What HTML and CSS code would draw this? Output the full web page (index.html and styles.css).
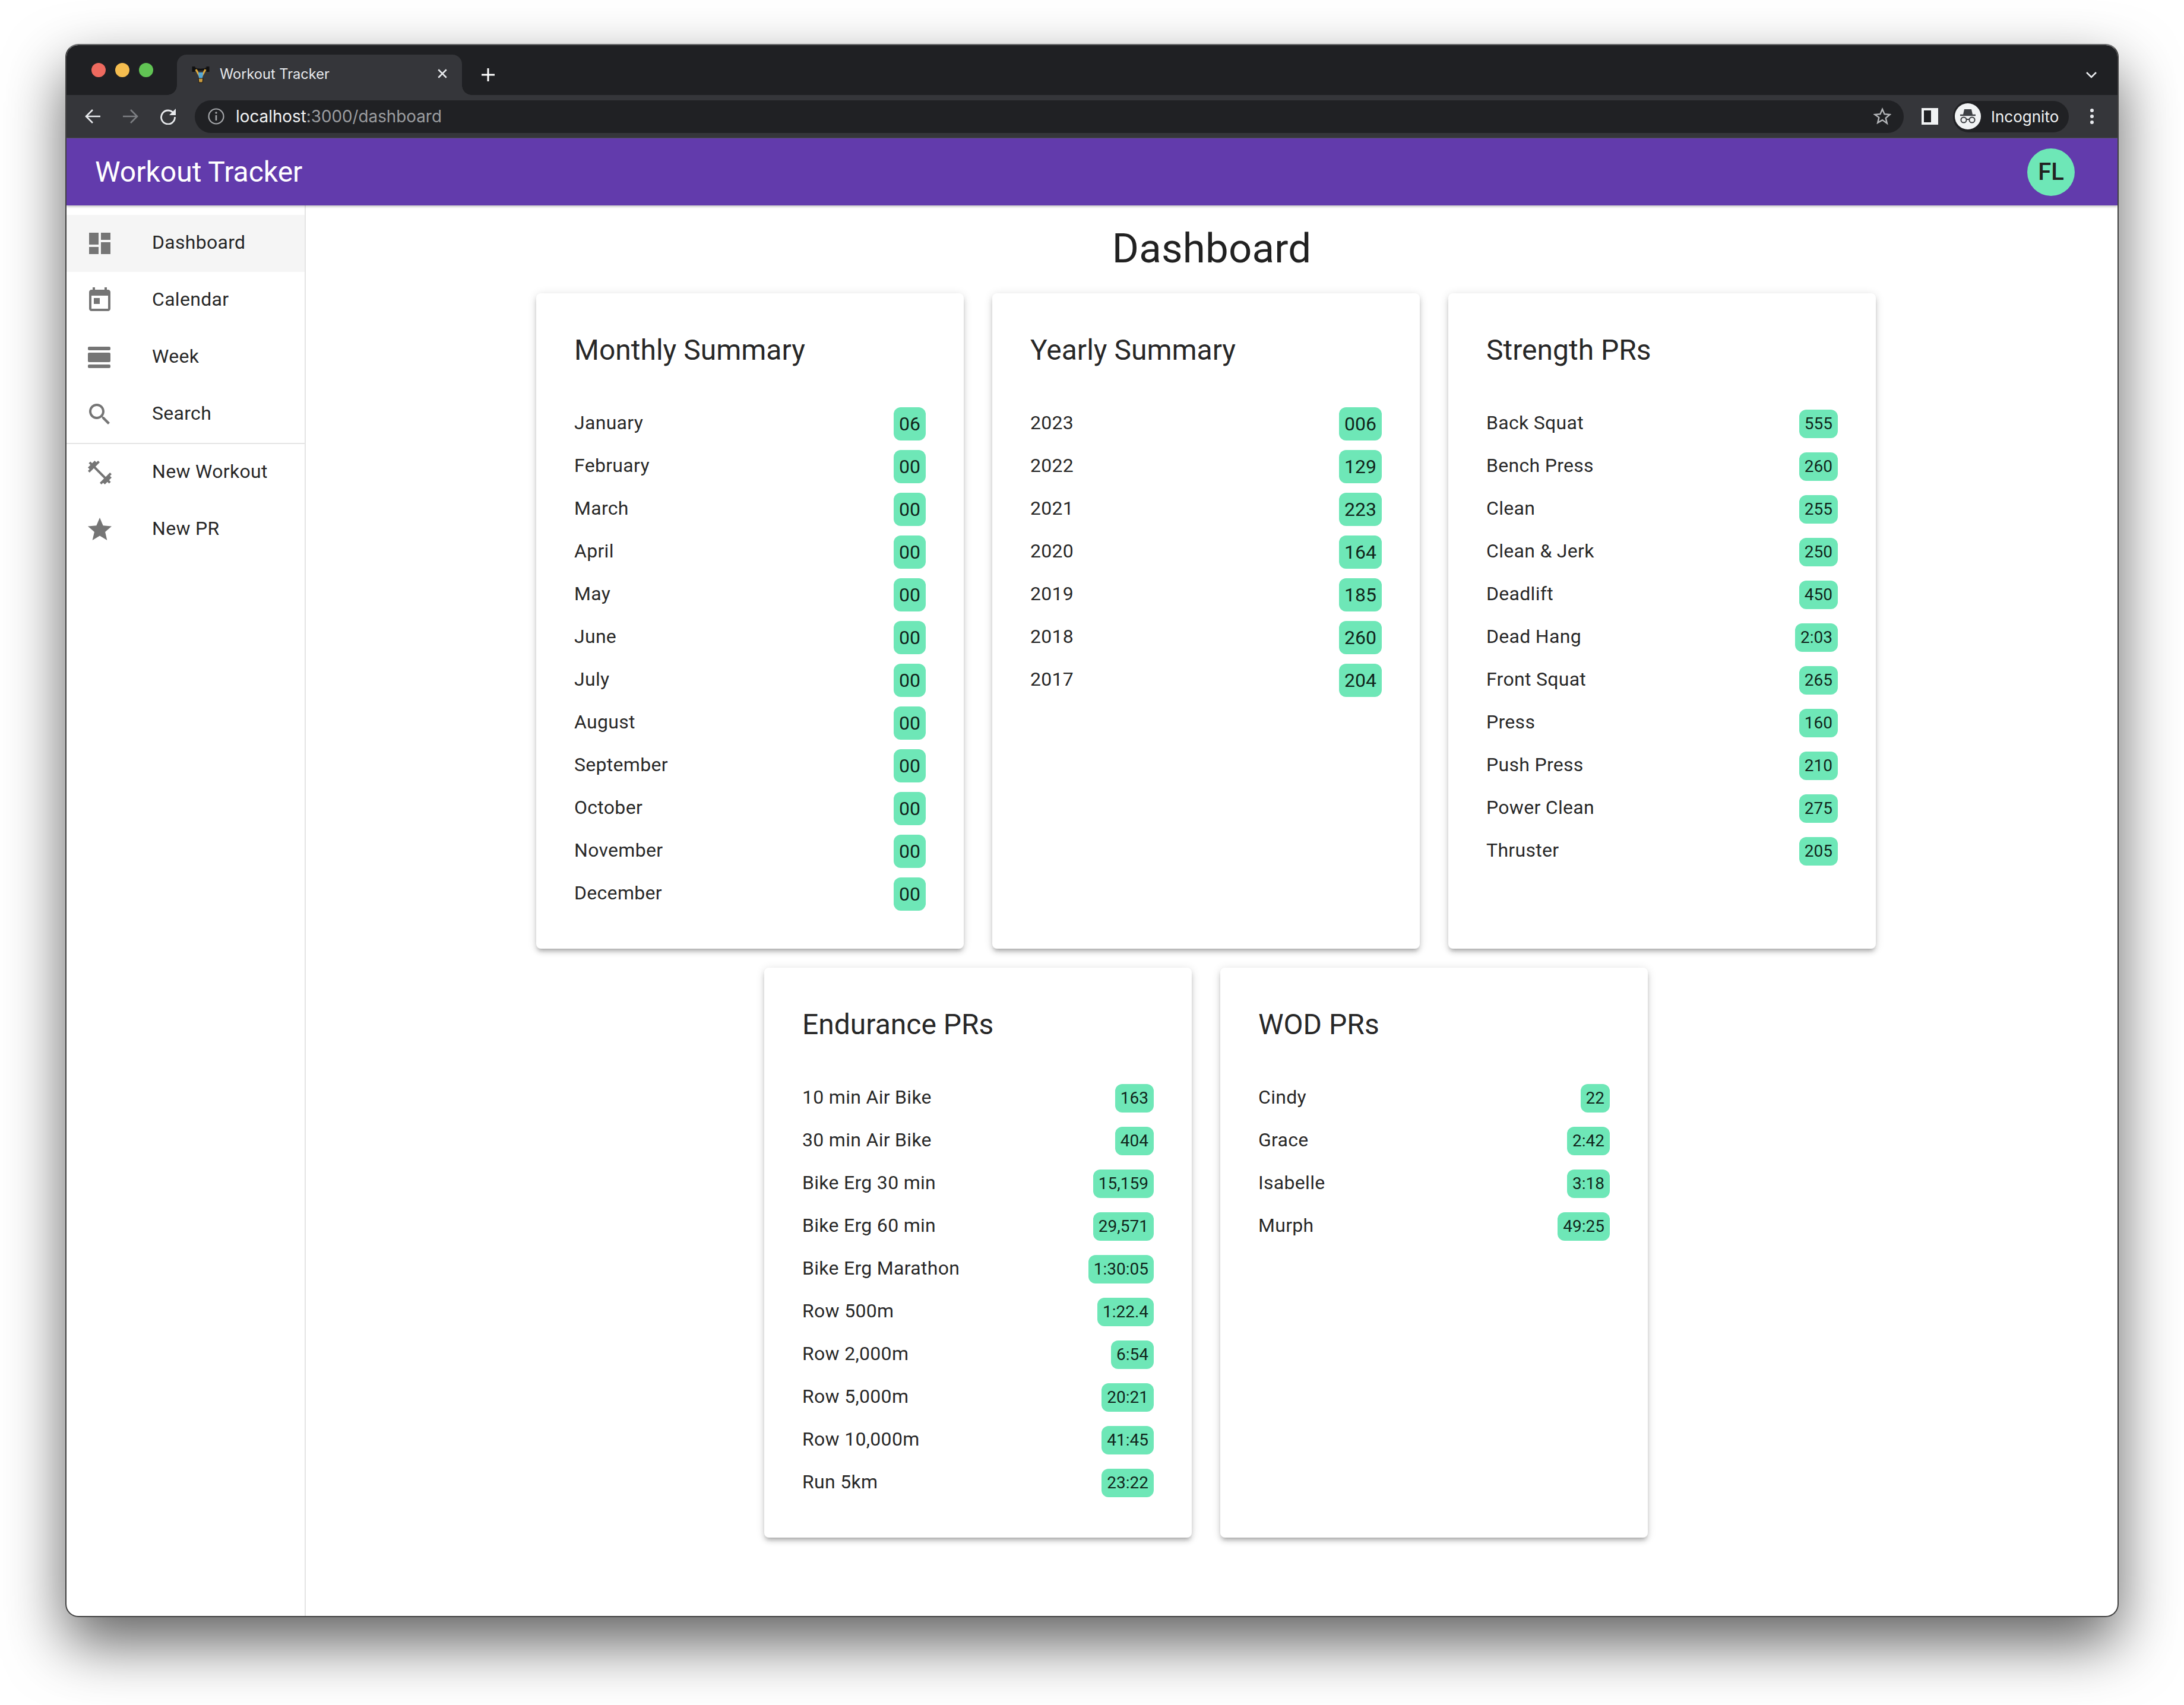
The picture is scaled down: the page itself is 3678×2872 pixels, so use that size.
FILE: index.html
```html
<!DOCTYPE html>
<html lang="en">
<head>
    <meta charset="UTF-8">
    <title>Workout Tracker</title>
    <link rel="stylesheet" href="styles.css">
</head>
<body>
<div class="window">

    <!-- browser chrome -->
    <div class="tabstrip">
        <div class="lights">
            <span class="light red"></span>
            <span class="light yellow"></span>
            <span class="light green"></span>
        </div>
        <div class="tab">
            <svg class="favicon" viewBox="0 0 30 32">
                <path d="M3 4v9M27 4v9" stroke="#111" stroke-width="5" fill="none"/>
                <path d="M5 7c4 3 16 3 20 0" stroke="#111" stroke-width="3" fill="none"/>
                <path d="M7 9l6 11h4l6-11" stroke="#e2ac3c" stroke-width="3" fill="none"/>
                <path d="M11 14h8l-1 10h-6z" fill="#54a8d8"/>
                <path d="M11 24h8l-1 7h-6z" fill="#c99a3e" stroke="#111" stroke-width="1"/>
            </svg>
            <span class="tab-title">Workout Tracker</span>
            <svg class="tab-close" viewBox="0 0 16 16"><path d="M2 2l12 12M14 2L2 14" stroke="#e8eaed" stroke-width="2.2"/></svg>
        </div>
        <svg class="new-tab" viewBox="0 0 24 24"><path d="M12 1v22M1 12h22" stroke="#fff" stroke-width="3"/></svg>
        <svg class="tab-menu" viewBox="0 0 20 12"><path d="M2 2l8 8 8-8" stroke="#e8eaed" stroke-width="2.6" fill="none"/></svg>
    </div>

    <div class="toolbar">
        <svg class="tool-icon" viewBox="0 0 28 28"><path d="M27 14H3M14 3L3 14l11 11" stroke="#e8eaed" stroke-width="2.6" fill="none"/></svg>
        <svg class="tool-icon forward" viewBox="0 0 28 28"><path d="M1 14h24M14 3l11 11-11 11" stroke="#7c7e82" stroke-width="2.6" fill="none"/></svg>
        <svg class="tool-icon reload" viewBox="0 0 28 28"><path d="M23.5 9A11.5 11.5 0 1 0 25.5 15" stroke="#e8eaed" stroke-width="2.8" fill="none"/><path d="M27 1v11H16z" fill="#e8eaed"/></svg>
        <div class="address">
            <svg class="info-icon" viewBox="0 0 28 28"><circle cx="14" cy="14" r="12.5" stroke="#a4a6a9" stroke-width="2.2" fill="none"/><path d="M14 12v9" stroke="#a4a6a9" stroke-width="2.6"/><circle cx="14" cy="8" r="1.7" fill="#a4a6a9"/></svg>
            <span class="url"><span class="host">localhost</span>:3000/dashboard</span>
            <svg class="bookmark" viewBox="0 0 30 30"><path d="M15 3l3.6 8.2 8.9.8-6.8 5.9 2.1 8.8L15 21.1l-7.8 4.6 2.1-8.8L2.5 12l8.9-.8z" stroke="#b4b6b9" stroke-width="2.4" fill="none"/></svg>
        </div>
        <div class="side-panel"></div>
        <div class="incognito">
            <svg class="incognito-icon" viewBox="0 0 44 44">
                <circle cx="22" cy="22" r="22" fill="#f1f3f4"/>
                <path d="M16 10h12l2 9H14z" fill="#3c3f43"/>
                <path d="M9 20h26" stroke="#3c3f43" stroke-width="2.4"/>
                <circle cx="15" cy="28" r="4.6" stroke="#3c3f43" stroke-width="2" fill="none"/>
                <circle cx="29" cy="28" r="4.6" stroke="#3c3f43" stroke-width="2" fill="none"/>
                <path d="M19.5 27h5" stroke="#3c3f43" stroke-width="2"/>
            </svg>
            <span>Incognito</span>
        </div>
        <div class="dots"><span></span><span></span><span></span></div>
    </div>

    <!-- app -->
    <header class="appbar">
        <div class="brand">Workout Tracker</div>
        <div class="avatar">FL</div>
    </header>

    <div class="app-body">
        <nav class="sidebar">
            <a class="nav-item selected">
                <svg class="nav-icon" viewBox="0 0 24 24"><path d="M3 13h8V3H3v10zm0 8h8v-6H3v6zm10 0h8V11h-8v10zm0-18v6h8V3h-8z"/></svg>
                <span class="nav-label">Dashboard</span>
            </a>
            <a class="nav-item">
                <svg class="nav-icon" viewBox="0 0 24 24"><path d="M19 3h-1V1h-2v2H8V1H6v2H5c-1.11 0-1.99.9-1.99 2L3 19c0 1.1.89 2 2 2h14c1.1 0 2-.9 2-2V5c0-1.1-.9-2-2-2zm0 16H5V8h14v11zM7 10h5v5H7z"/></svg>
                <span class="nav-label">Calendar</span>
            </a>
            <a class="nav-item">
                <svg class="nav-icon" viewBox="0 0 24 24"><path d="M3 21h17c.55 0 1-.45 1-1v-1c0-.55-.45-1-1-1H3c-.55 0-1 .45-1 1v1c0 .55.45 1 1 1zM20 8H3c-.55 0-1 .45-1 1v6c0 .55.45 1 1 1h17c.55 0 1-.45 1-1V9c0-.55-.45-1-1-1zM2 4v1c0 .55.45 1 1 1h17c.55 0 1-.45 1-1V4c0-.55-.45-1-1-1H3c-.55 0-1 .45-1 1z"/></svg>
                <span class="nav-label">Week</span>
            </a>
            <a class="nav-item">
                <svg class="nav-icon" viewBox="0 0 24 24"><path d="M15.5 14h-.79l-.28-.27C15.41 12.59 16 11.11 16 9.5 16 5.91 13.09 3 9.5 3S3 5.91 3 9.5 5.91 16 9.5 16c1.61 0 3.09-.59 4.23-1.57l.27.28v.79l5 4.99L20.49 19l-4.99-5zm-6 0C7.01 14 5 11.99 5 9.5S7.01 5 9.5 5 14 7.01 14 9.5 11.99 14 9.5 14z"/></svg>
                <span class="nav-label">Search</span>
            </a>
            <div class="nav-divider"></div>
            <a class="nav-item">
                <svg class="nav-icon" viewBox="0 0 24 24"><path d="M20.57 14.86L22 13.43 20.57 12 17 15.57 8.43 7 12 3.43 10.57 2 9.14 3.43 7.71 2 5.57 4.14 4.14 2.71 2.71 4.14l1.43 1.43L2 7.71l1.43 1.43L2 10.57 3.43 12 7 8.43 15.57 17 12 20.57 13.43 22l1.43-1.43L16.29 22l2.14-2.14 1.43 1.43 1.43-1.43-1.43-1.43L22 16.29z"/></svg>
                <span class="nav-label">New Workout</span>
            </a>
            <a class="nav-item">
                <svg class="nav-icon" viewBox="0 0 24 24"><path d="M12 17.27L18.18 21l-1.64-7.03L22 9.24l-7.19-.61L12 2 9.19 8.63 2 9.24l5.46 4.73L5.82 21z"/></svg>
                <span class="nav-label">New PR</span>
            </a>
        </nav>

        <main class="content">
            <h1 class="page-title">Dashboard</h1>

            <div class="card-row">
                <section class="card large-chips">
                    <h2>Monthly Summary</h2>
                    <div class="stat"><span class="stat-label">January</span><span class="chip">06</span></div>
                    <div class="stat"><span class="stat-label">February</span><span class="chip">00</span></div>
                    <div class="stat"><span class="stat-label">March</span><span class="chip">00</span></div>
                    <div class="stat"><span class="stat-label">April</span><span class="chip">00</span></div>
                    <div class="stat"><span class="stat-label">May</span><span class="chip">00</span></div>
                    <div class="stat"><span class="stat-label">June</span><span class="chip">00</span></div>
                    <div class="stat"><span class="stat-label">July</span><span class="chip">00</span></div>
                    <div class="stat"><span class="stat-label">August</span><span class="chip">00</span></div>
                    <div class="stat"><span class="stat-label">September</span><span class="chip">00</span></div>
                    <div class="stat"><span class="stat-label">October</span><span class="chip">00</span></div>
                    <div class="stat"><span class="stat-label">November</span><span class="chip">00</span></div>
                    <div class="stat"><span class="stat-label">December</span><span class="chip">00</span></div>
                </section>

                <section class="card large-chips">
                    <h2>Yearly Summary</h2>
                    <div class="stat"><span class="stat-label">2023</span><span class="chip">006</span></div>
                    <div class="stat"><span class="stat-label">2022</span><span class="chip">129</span></div>
                    <div class="stat"><span class="stat-label">2021</span><span class="chip">223</span></div>
                    <div class="stat"><span class="stat-label">2020</span><span class="chip">164</span></div>
                    <div class="stat"><span class="stat-label">2019</span><span class="chip">185</span></div>
                    <div class="stat"><span class="stat-label">2018</span><span class="chip">260</span></div>
                    <div class="stat"><span class="stat-label">2017</span><span class="chip">204</span></div>
                </section>

                <section class="card">
                    <h2>Strength PRs</h2>
                    <div class="stat"><span class="stat-label">Back Squat</span><span class="chip">555</span></div>
                    <div class="stat"><span class="stat-label">Bench Press</span><span class="chip">260</span></div>
                    <div class="stat"><span class="stat-label">Clean</span><span class="chip">255</span></div>
                    <div class="stat"><span class="stat-label">Clean &amp; Jerk</span><span class="chip">250</span></div>
                    <div class="stat"><span class="stat-label">Deadlift</span><span class="chip">450</span></div>
                    <div class="stat"><span class="stat-label">Dead Hang</span><span class="chip">2:03</span></div>
                    <div class="stat"><span class="stat-label">Front Squat</span><span class="chip">265</span></div>
                    <div class="stat"><span class="stat-label">Press</span><span class="chip">160</span></div>
                    <div class="stat"><span class="stat-label">Push Press</span><span class="chip">210</span></div>
                    <div class="stat"><span class="stat-label">Power Clean</span><span class="chip">275</span></div>
                    <div class="stat"><span class="stat-label">Thruster</span><span class="chip">205</span></div>
                </section>
            </div>

            <div class="card-row">
                <section class="card">
                    <h2>Endurance PRs</h2>
                    <div class="stat"><span class="stat-label">10 min Air Bike</span><span class="chip">163</span></div>
                    <div class="stat"><span class="stat-label">30 min Air Bike</span><span class="chip">404</span></div>
                    <div class="stat"><span class="stat-label">Bike Erg 30 min</span><span class="chip">15,159</span></div>
                    <div class="stat"><span class="stat-label">Bike Erg 60 min</span><span class="chip">29,571</span></div>
                    <div class="stat"><span class="stat-label">Bike Erg Marathon</span><span class="chip">1:30:05</span></div>
                    <div class="stat"><span class="stat-label">Row 500m</span><span class="chip">1:22.4</span></div>
                    <div class="stat"><span class="stat-label">Row 2,000m</span><span class="chip">6:54</span></div>
                    <div class="stat"><span class="stat-label">Row 5,000m</span><span class="chip">20:21</span></div>
                    <div class="stat"><span class="stat-label">Row 10,000m</span><span class="chip">41:45</span></div>
                    <div class="stat"><span class="stat-label">Run 5km</span><span class="chip">23:22</span></div>
                </section>

                <section class="card">
                    <h2>WOD PRs</h2>
                    <div class="stat"><span class="stat-label">Cindy</span><span class="chip">22</span></div>
                    <div class="stat"><span class="stat-label">Grace</span><span class="chip">2:42</span></div>
                    <div class="stat"><span class="stat-label">Isabelle</span><span class="chip">3:18</span></div>
                    <div class="stat"><span class="stat-label">Murph</span><span class="chip">49:25</span></div>
                </section>
            </div>
        </main>
    </div>
</div>
</body>
</html>
```
FILE: styles.css
```css
body {
    box-sizing: border-box;
    height: 2872px;
    margin: 0;
    padding: 74px 0 0 110px;
    overflow: hidden;
    background: #fff;
    font-family: Roboto, "Liberation Sans", sans-serif;
    color: rgba(0, 0, 0, 0.87);
}

.window {
    display: flex;
    flex-direction: column;
    box-sizing: border-box;
    width: 3458px;
    height: 2650px;
    border: 2px solid #404040;
    border-top-color: #68696b;
    border-radius: 22px;
    overflow: hidden;
    background: #fff;
    box-shadow: 0 44px 100px rgba(0, 0, 0, 0.62);
}

/* browser chrome */
.tabstrip {
    display: flex;
    align-items: flex-end;
    height: 84px;
    padding-left: 42px;
    background: #1f2023;
    flex-shrink: 0;
}

.lights {
    display: flex;
    gap: 16px;
    align-self: flex-start;
    margin-top: 30px;
}

.light {
    width: 24px;
    height: 24px;
    border-radius: 50%;
}

.red { background: #ee6a5f; }
.yellow { background: #f5bd4f; }
.green { background: #61c454; }

.tab {
    position: relative;
    display: flex;
    align-items: center;
    box-sizing: border-box;
    width: 480px;
    height: 68px;
    margin-left: 40px;
    padding: 0 24px 4px 25px;
    background: #35363a;
    border-radius: 16px 16px 0 0;
    color: #e8eaed;
    font-family: Inter, sans-serif;
    font-size: 23.6px;
}

.tab::before,
.tab::after {
    content: "";
    position: absolute;
    bottom: 0;
    width: 16px;
    height: 16px;
}

.tab::before {
    left: -16px;
    background: radial-gradient(circle at 0 0, #1f2023 15.5px, #35363a 16px);
}

.tab::after {
    right: -16px;
    background: radial-gradient(circle at 100% 0, #1f2023 15.5px, #35363a 16px);
}

.favicon {
    width: 30px;
    height: 32px;
    flex-shrink: 0;
}

.tab-title {
    margin-left: 17px;
}

.tab-close {
    width: 18px;
    height: 18px;
    margin-left: auto;
}

.new-tab {
    width: 24px;
    height: 24px;
    margin: 0 0 22px 32px;
}

.tab-menu {
    width: 20px;
    height: 12px;
    margin: 0 34px 28px auto;
}

.toolbar {
    display: flex;
    align-items: center;
    height: 72px;
    padding: 0 40px 0 30px;
    background: #35363a;
    border-bottom: 1px solid #55565a;
    flex-shrink: 0;
}

.tool-icon {
    width: 28px;
    height: 28px;
    flex-shrink: 0;
}

.forward { margin-left: 36px; }
.reload { margin-left: 35px; }

.address {
    display: flex;
    align-items: center;
    flex: 1;
    height: 55px;
    margin-left: 31px;
    padding: 0 21px 0 22px;
    background: #202124;
    border-radius: 28px;
}

.info-icon {
    width: 28px;
    height: 28px;
}

.url {
    margin-left: 19px;
    color: #9b9da0;
    font-family: Inter, sans-serif;
    font-size: 27.8px;
}

.host {
    color: #f1f3f4;
}

.bookmark {
    width: 30px;
    height: 30px;
    margin-left: auto;
}

.side-panel {
    box-sizing: border-box;
    width: 28px;
    height: 28px;
    margin-left: 30px;
    background: linear-gradient(to right, #202124 60%, #f1f3f4 60%);
    border: 4px solid #f1f3f4;
}

.incognito {
    display: flex;
    align-items: center;
    box-sizing: border-box;
    width: 195px;
    height: 53px;
    margin-left: 25px;
    padding-left: 3px;
    background: #202124;
    border-radius: 27px;
    color: #f1f3f4;
    font-family: Inter, sans-serif;
    font-size: 26px;
}

.incognito-icon {
    width: 44px;
    height: 44px;
    margin-right: 17px;
}

.dots {
    display: flex;
    flex-direction: column;
    gap: 4px;
    margin-left: 36px;
}

.dots span {
    width: 6px;
    height: 6px;
    border-radius: 50%;
    background: #e8eaed;
}

/* app bar */
.appbar {
    display: flex;
    align-items: center;
    justify-content: space-between;
    height: 113px;
    padding: 0 72px 0 48px;
    background: #623bac;
    box-shadow: 0 2px 4px rgba(0, 0, 0, 0.25);
    color: #fff;
    flex-shrink: 0;
    position: relative;
}

.brand {
    font-size: 48px;
}

.avatar {
    display: flex;
    align-items: center;
    justify-content: center;
    width: 80px;
    height: 80px;
    border-radius: 50%;
    background: #6ee7b7;
    color: #222;
    font-size: 40px;
    font-weight: 500;
}

.app-body {
    display: flex;
    flex: 1;
    min-height: 0;
}

/* sidebar */
.sidebar {
    box-sizing: border-box;
    width: 403px;
    padding-top: 16px;
    border-right: 2px solid #e4e4e4;
    flex-shrink: 0;
}

.nav-item {
    display: flex;
    align-items: center;
    height: 96px;
    padding-left: 32px;
    font-size: 32px;
    letter-spacing: 0.3px;
}

.nav-item.selected {
    background: #f5f5f5;
}

.nav-icon {
    width: 48px;
    height: 48px;
    margin-right: 64px;
    fill: #757575;
    flex-shrink: 0;
}

.nav-label {
    margin-bottom: 4px;
}

.nav-divider {
    height: 2px;
    background: #e4e4e4;
}

/* dashboard */
.content {
    flex: 1;
    min-width: 0;
}

.page-title {
    margin: 31px 0 33px;
    font-size: 69px;
    font-weight: 400;
    letter-spacing: 0.2px;
    line-height: 84px;
    text-align: center;
}

.card-row {
    display: flex;
    justify-content: center;
    gap: 48px;
    margin-bottom: 32px;
    padding-right: 19px;
}

.card {
    box-sizing: border-box;
    width: 720px;
    padding: 64px 64px 56px;
    background: #fff;
    border-radius: 8px;
    box-shadow: 0 6px 6px -4px rgba(0, 0, 0, 0.2), 0 6px 8px rgba(0, 0, 0, 0.14), 0 2px 16px rgba(0, 0, 0, 0.12);
}

.card h2 {
    margin: 0 0 56px;
    font-size: 48px;
    font-weight: 400;
    line-height: 64px;
}

.stat {
    display: flex;
    align-items: center;
    justify-content: space-between;
    height: 72px;
    font-size: 32px;
}

.stat-label {
    margin-bottom: 4px;
    letter-spacing: 0.3px;
}

.chip {
    padding: 4px 9px;
    background: #6ee7b7;
    border-radius: 12px;
    font-size: 28px;
    line-height: 40px;
}

.large-chips .chip {
    font-size: 32px;
    line-height: 48px;
}
```
